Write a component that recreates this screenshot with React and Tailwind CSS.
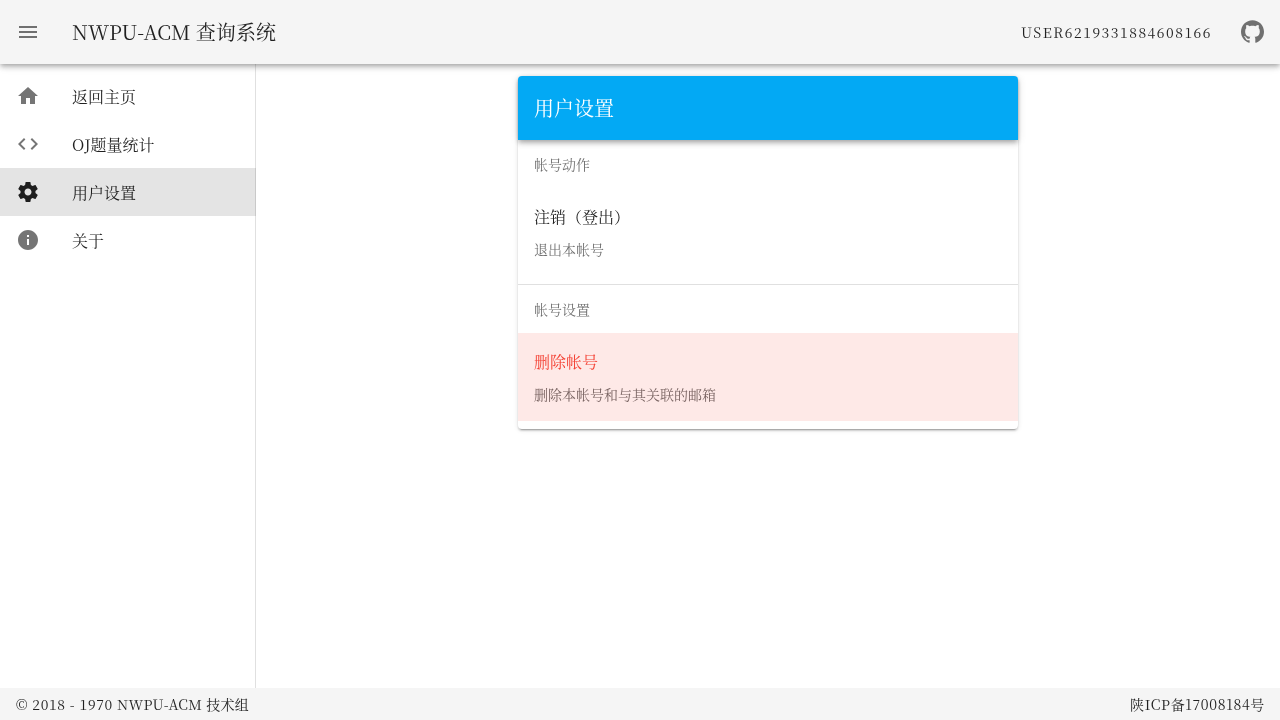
import React from "react";

const PATHS = {
  menu: "M3 18h18v-2H3v2zm0-5h18v-2H3v2zm0-7v2h18V6H3z",
  home: "M10 20v-6h4v6h5v-8h3L12 3 2 12h3v8z",
  code: "M9.4 16.6L4.8 12l4.6-4.6L8 6l-6 6 6 6 1.4-1.4zm5.2 0l4.6-4.6-4.6-4.6L16 6l6 6-6 6-1.4-1.4z",
  settings:
    "M19.43 12.98c.04-.32.07-.64.07-.98s-.03-.66-.07-.98l2.11-1.65c.19-.15.24-.42.12-.64l-2-3.46c-.12-.22-.39-.3-.61-.22l-2.49 1c-.52-.4-1.08-.73-1.69-.98l-.38-2.65C14.46 2.18 14.25 2 14 2h-4c-.25 0-.46.18-.49.42l-.38 2.65c-.61.25-1.17.59-1.69.98l-2.49-1c-.23-.09-.49 0-.61.22l-2 3.46c-.13.22-.07.49.12.64l2.11 1.65c-.04.32-.07.65-.07.98s.03.66.07.98l-2.11 1.65c-.19.15-.24.42-.12.64l2 3.46c.12.22.39.3.61.22l2.49-1c.52.4 1.08.73 1.69.98l.38 2.65c.03.24.24.42.49.42h4c.25 0 .46-.18.49-.42l.38-2.65c.61-.25 1.17-.59 1.69-.98l2.49 1c.23.09.49 0 .61-.22l2-3.46c.12-.22.07-.49-.12-.64l-2.11-1.65zM12 15.5c-1.93 0-3.5-1.57-3.5-3.5s1.57-3.5 3.5-3.5 3.5 1.57 3.5 3.5-1.57 3.5-3.5 3.5z",
  info: "M12 2C6.48 2 2 6.48 2 12s4.48 10 10 10 10-4.48 10-10S17.52 2 12 2zm1 15h-2v-6h2v6zm0-8h-2V7h2v2z",
  github:
    "M12 .297c-6.63 0-12 5.373-12 12 0 5.303 3.438 9.8 8.205 11.385.6.113.82-.258.82-.577 0-.285-.01-1.04-.015-2.04-3.338.724-4.042-1.61-4.042-1.61C4.422 18.07 3.633 17.7 3.633 17.7c-1.087-.744.084-.729.084-.729 1.205.084 1.838 1.236 1.838 1.236 1.07 1.835 2.809 1.305 3.495.998.108-.776.417-1.305.76-1.605-2.665-.3-5.466-1.332-5.466-5.93 0-1.31.465-2.38 1.235-3.22-.135-.303-.54-1.523.105-3.176 0 0 1.005-.322 3.3 1.23.96-.267 1.98-.399 3-.405 1.02.006 2.04.138 3 .405 2.28-1.552 3.285-1.23 3.285-1.23.645 1.653.24 2.873.12 3.176.765.84 1.23 1.91 1.23 3.22 0 4.61-2.805 5.625-5.475 5.92.42.36.81 1.096.81 2.22 0 1.606-.015 2.896-.015 3.286 0 .315.21.69.825.57C20.565 22.092 24 17.592 24 12.297c0-6.627-5.373-12-12-12",
};

function Icon({ name, size = "size-6", className = "" }) {
  return (
    <svg viewBox="0 0 24 24" fill="currentColor" aria-hidden="true" className={`${size} shrink-0 ${className}`}>
      <path d={PATHS[name]} />
    </svg>
  );
}

const NAV = [
  { icon: "home", label: "返回主页" },
  { icon: "code", label: "OJ题量统计" },
  { icon: "settings", label: "用户设置", active: true },
  { icon: "info", label: "关于" },
];

function NavItem({ icon, label, active }) {
  return (
    <a className={`flex h-12 items-center gap-8 px-4 ${active ? "-mr-px bg-black/[0.104]" : ""}`}>
      <Icon name={icon} className={active ? "text-black/87" : "text-black/54"} />
      <span className="pt-0.5 text-base leading-6">{label}</span>
    </a>
  );
}

function Subheader({ children }) {
  return <h3 className="flex h-12 items-center px-4 text-sm text-black/58">{children}</h3>;
}

function ActionRow({ title, detail, danger }) {
  return (
    <div className={`flex h-[88px] flex-col px-4 pt-[17px] ${danger ? "bg-[#fee9e7]" : ""}`}>
      <div className={`h-6 text-base leading-6 ${danger ? "text-[#f44336]" : ""}`}>{title}</div>
      <div className={`mt-2.5 text-sm leading-5 ${danger ? "text-[#7a6563]" : "text-black/58"}`}>{detail}</div>
    </div>
  );
}

export default function App() {
  return (
    <div className="flex h-screen flex-col overflow-hidden font-['Noto_Serif_CJK_SC','Noto_Serif_SC','Liberation_Serif','Noto_Sans_CJK_SC',serif] text-black/87 will-change-transform">
      <header className="relative z-10 flex h-16 shrink-0 items-center bg-[#f5f5f5] px-4 shadow-[0_2px_4px_-1px_rgba(0,0,0,0.2),0_4px_5px_0_rgba(0,0,0,0.14),0_1px_10px_0_rgba(0,0,0,0.12)]">
        <Icon name="menu" className="text-black/54" />
        <h1 className="ml-8 text-xl leading-none tracking-[0.05px]">NWPU-ACM 查询系统</h1>
        <span className="ml-auto text-sm tracking-[1.5px]">USER6219331884608166</span>
        <Icon name="github" size="size-[23px]" className="mb-px ml-[29px] text-black/54" />
      </header>
      <div className="flex min-h-0 flex-1">
        <nav className="w-64 shrink-0 border-r border-black/12 pt-2">
          {NAV.map((item) => (
            <NavItem key={item.label} {...item} />
          ))}
        </nav>
        <main className="flex flex-1 items-start justify-center pt-3">
          <section className="w-[500px] rounded bg-white pb-2 shadow-[0_3px_1px_-2px_rgba(0,0,0,0.2),0_2px_2px_0_rgba(0,0,0,0.14),0_1px_5px_0_rgba(0,0,0,0.12)]">
            <h2 className="flex h-16 items-center rounded-t bg-[#03a9f4] px-4 text-xl text-white shadow-[0_2px_4px_-1px_rgba(0,0,0,0.2),0_4px_5px_0_rgba(0,0,0,0.14),0_1px_10px_0_rgba(0,0,0,0.12)]">
              用户设置
            </h2>
            <Subheader>帐号动作</Subheader>
            <ActionRow title="注销（登出）" detail="退出本帐号" />
            <hr className="mt-2 border-black/12" />
            <Subheader>帐号设置</Subheader>
            <ActionRow title="删除帐号" detail="删除本帐号和与其关联的邮箱" danger />
          </section>
        </main>
      </div>
      <footer className="flex h-8 shrink-0 items-center justify-between bg-[#f5f5f5] px-4 text-sm">
        <span className="tracking-[0.3px]">
          <span className="tracking-[0.63px]">© 2018 - 1970 </span>NWPU-ACM 技术组
        </span>
        <span className="-mr-px tracking-[0.65px]">陕ICP备17008184号</span>
      </footer>
    </div>
  );
}
